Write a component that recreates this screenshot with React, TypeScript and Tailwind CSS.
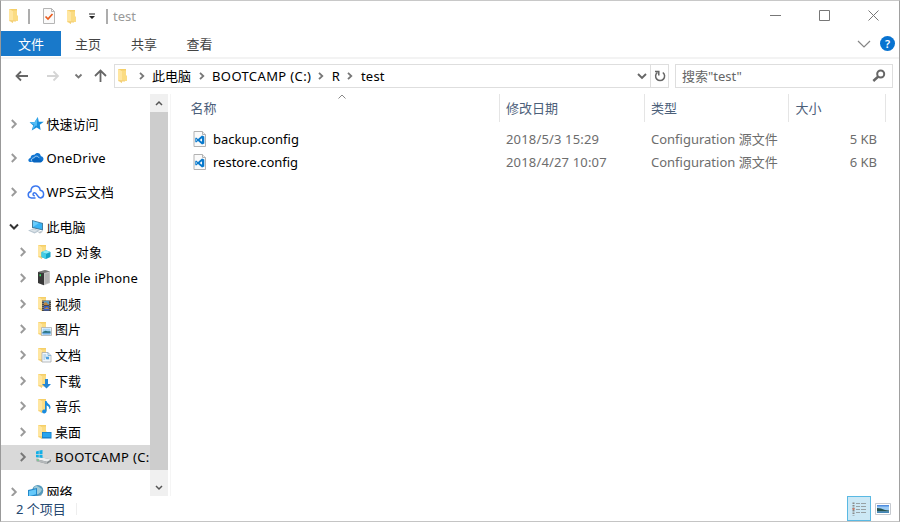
import React from 'react';

type IconProps = { className?: string };

function Folder({ children }: { children?: React.ReactNode }) {
  return (
    <svg width="18" height="18" viewBox="0 0 18 18" className="shrink-0">
      <path d="M3 2h8v11l-8 1z" fill="#f5cf68" />
      <path d="M3 2l4 2v12l-4-2z" fill="#ffe6a0" />
      <path d="M7 3.500h4v4.500l1 1v5H7z" fill="#fbdc83" />
      <path d="M3 13l4 3v-1.500h3v-1z" fill="#f3cf77" />
      {children}
    </svg>
  );
}

function Chevron({ dark, className = '' }: IconProps & { dark?: boolean }) {
  return (
    <svg width="8" height="10" viewBox="0 0 8 10" className={'shrink-0 ' + className} fill="none">
      <path d="M1.800 1L5.800 5L1.800 9" stroke={dark ? '#777777' : '#9a9a9a'} strokeWidth="1.900" />
    </svg>
  );
}

function Crumb() {
  return (
    <svg width="6" height="8" viewBox="0 0 6 8" fill="none">
      <path d="M1 .8L4.300 4L1 7.200" stroke="#777777" strokeWidth="1.800" />
    </svg>
  );
}

const icons = {
  star: (
    <svg width="18" height="18" viewBox="0 0 18 18">
      <path d="M10.800 2l1 4.700 5 .1-4 3 .8 5.200-3.900-2.600-5 3.100 1.500-4.900L2.600 7.300l5-.4z" fill="#168fdc" />
      <path d="M10.500 2.500l-.7 8.500-7-3.500 5-.4zM9.800 9l-4.500 6 1.200-4.600z" fill="#54bdf5" />
    </svg>
  ),
  cloud: (
    <svg width="18" height="18" viewBox="0 0 18 18">
      <path d="M3 13C.6 12.500 1 9.200 3.500 8.900 3.500 6.500 6 5.200 7.500 5.800c2-3 6-2 6.400 1.500 3.500.4 3.400 5.200.1 5.700H6z" fill="#1176d3" />
      <path d="M5.500 13C3.300 11.500 4.600 9 6.700 9c1.300-2.400 4.200-2.300 5.300-.3" fill="none" stroke="#fff" strokeWidth=".6" />
      <path d="M7 13.500c-2-.5-2-3.500.4-3.700 1.100-2 4.600-1.700 5 .9 2.900-.3 3.400 2.500 1.200 2.800z" fill="#0865bf" />
    </svg>
  ),
  wps: (
    <svg width="18" height="18" viewBox="0 0 18 18" fill="none" stroke="#3b78f0" strokeWidth="1.500" strokeLinecap="round">
      <path d="M8 15H4.500C.3 14.700.1 9.500 3.900 8.500 3.900 1.800 12.700 1.200 13.200 7.200c4.600.8 4.300 7.200.4 7.800-3.400 0-3.400-5.200-6-5.200-1.900 0-2.200 2.400-.4 3" />
    </svg>
  ),
  pc: (
    <svg width="18" height="18" viewBox="0 0 18 18">
      <path d="M5 2l11 3v7.500L5 10z" fill="#477fa0" />
      <path d="M6 3.200l9 2.500v5.500L6 9z" fill="#38b3f5" />
      <path d="M6 3.200l6 1.700-6 4z" fill="#69cdfc" />
      <path d="M1 12.500l6-2 6 2.200-5.500 2.800z" fill="#b9c7d1" />
      <path d="M3 12.500l4-1.200 3.800 1.400L7.500 14z" fill="#dbe3e8" />
      <path d="M11 14.500l3-1.500 2 .8-3 1.600z" fill="#b8c1c8" />
    </svg>
  ),
  three: (
    <Folder>
      <path d="M6.500 9l4.500-1.800L15.500 9v5L11 16l-4.500-2z" fill="#12a4c8" />
      <path d="M6.500 9L11 7.200 15.500 9 11 10.800z" fill="#8ce9f5" />
      <path d="M6.500 9l4.500 1.800V16l-4.500-2z" fill="#42cce5" />
    </Folder>
  ),
  phone: (
    <svg width="18" height="18" viewBox="0 0 18 18">
      <path d="M3 3l7-2 5 1.500V14l-6 2.300L3 14z" fill="#c4c4c4" />
      <path d="M3 3l7-2 5 1.500L9 4z" fill="#777" />
      <path d="M3 3l6 1v12.300L3 14z" fill="#383838" />
      <path d="M10 5l4-1v9.500L10 15z" fill="#b4b4b4" />
      <path d="M4.500 5.300h1.500v2H4.500z" fill="#39df61" />
    </svg>
  ),
  video: (
    <Folder>
      <path d="M7 5.500h9v10.500H7z" fill="#4b4944" />
      <path d="M9 6h5v4H9z" fill="#579ec9" />
      <path d="M9 11h5v4.500H9z" fill="#3b62c4" />
      <path d="M9 8l2-1 3 3H9zM9 14l3-2 2 2z" fill="#bd8543" />
      <path d="M8 6v10M15.200 6v10" stroke="#d2d1ca" strokeWidth=".8" strokeDasharray="1 1" />
    </Folder>
  ),
  picture: (
    <Folder>
      <path d="M6.500 7.500h10v8h-10z" fill="#fff" stroke="#a9adb0" strokeWidth=".8" />
      <path d="M7.500 8.500h8v6h-8z" fill="#a4d5f8" />
      <path d="M7.500 12l3-1.300 2 .5h3v2h-8z" fill="#28717d" />
      <path d="M7.500 12.800h8v1.700h-8z" fill="#6aaae0" />
    </Folder>
  ),
  doc: (
    <Folder>
      <path d="M7 6.500h6l3 3V16H7z" fill="#f3f8fc" stroke="#a6aaad" strokeWidth=".8" />
      <path d="M8.300 9h3m-3 2h6m-6 2h2m1 0h3M13 6.500v3h3" fill="none" stroke="#7cb2da" strokeWidth=".9" />
      <path d="M11 11h3v2h-3z" fill="#4ba0df" />
    </Folder>
  ),
  download: (
    <Folder><path d="M10 7h3v5h3l-4.500 4.500L7 12h3z" fill="#2285d4" /></Folder>
  ),
  music: (
    <Folder>
      <path d="M10 4h1.600c.3 3 4.400 3 3.900 7.200l-1.200 1c.2-2.400-1-2.900-2.700-3.700V14c0 3.300-5 2.900-4.500.4.300-1.500 1.600-2 2.900-1.700z" fill="#198bde" />
    </Folder>
  ),
  desktop: (
    <Folder><path d="M7 9h9.500v6.500H7z" fill="#177dc6" /><path d="M7.700 9.700h8v4.500h-8z" fill="#27a4ed" /></Folder>
  ),
  drive: (
    <svg width="18" height="18" viewBox="0 0 18 18">
      <path d="M1 11l5-1.800L16 11.500v2L12 16 1 13z" fill="#858b8e" />
      <path d="M1 11l5-1.800L16 11.500 12 13.700z" fill="#eceeef" />
      <path d="M1 11l11 2.700V16L1 13z" fill="#b4b8ba" />
      <path d="M1 3.500l2.800-.7v3.400H1zM4.400 2.600L7.500 2v4.200H4.400zM1 6.900h2.800v2.600L1 9.200zM4.400 6.900h3.100V10l-3.100-.4z" fill="#12afe7" />
      <path d="M2 12h2" stroke="#51d475" />
    </svg>
  ),
  network: (
    <svg width="18" height="18" viewBox="0 0 18 18">
      <circle cx="10.800" cy="7.500" r="5.500" fill="#5599bc" />
      <path d="M7 4c4-3 5 1 8 2-1 4-4 6-7 5z" fill="#9fcbd9" />
      <path d="M1 7l9-2v7.500l-9 2z" fill="#2388c9" />
      <path d="M2 8l7-1.700v5L2 13.200z" fill="#66c9fa" />
      <path d="M8 14l5-2 2 1-5 2.500z" fill="#9badb8" />
    </svg>
  ),
};

function TreeRow({ icon, label, child, open, selected, gap, labelClass = '' }: {
  icon: keyof typeof icons; label: string; child?: boolean; open?: boolean; selected?: boolean; gap?: boolean; labelClass?: string;
}) {
  return (
    <div className={'flex h-[25.650px] w-[149px] shrink-0 items-center overflow-hidden whitespace-nowrap ' + (child ? 'pl-[18px] ' : 'pl-[9px] ') + (selected ? 'bg-[#d9d9d9] ' : '') + (gap ? 'mb-[8.650px]' : '')}>
      {open ? (
        <svg width="10" height="8" viewBox="0 0 10 8" className="-ml-px shrink-0" fill="none"><path d="M1 1.500L5 5.500L9 1.500" stroke="#333" strokeWidth="2" /></svg>
      ) : <Chevron dark={selected} className="mr-px" />}
      <span className={'flex h-[18px] w-[18px] shrink-0 ' + (child ? 'ml-[7px]' : 'ml-[8px]')}>{icons[icon]}</span>
      <span className={(child ? 'ml-[2px] ' : 'ml-[1.500px] ') + labelClass}>{label}</span>
    </div>
  );
}

function FileIcon() {
  return (
    <svg width="14" height="18" viewBox="0 0 14 18" className="shrink-0">
      <path d="M1 1.500h8.500l3 3V16.500H1z" fill="#fafafa" stroke="#b2b2b2" />
      <path d="M9.500 1.500v3h3" fill="#eee" stroke="#b2b2b2" />
      <path d="M9 5.500l2.300 1v7L9 14.500l-4-3.600-1.900 1.600-.8-.5v-4l.8-.5L5 9.100z" fill="#0879cc" />
      <path d="M9 8.300v3.400L6.600 10zM3.200 9v2l1-1z" fill="#fafafa" />
    </svg>
  );
}

function FileRow({ name, date, size }: { name: string; date: string; size: string }) {
  return (
    <div className="flex h-[22.500px] items-center">
      <FileIcon />
      <span className="ml-[6px] w-[293px] text-black">{name}</span>
      <span className="w-[145px] tracking-[.16px]">{date}</span>
      <span className="w-[146px]">Configuration 源文件</span>
      <span className="w-20 text-right">{size}</span>
    </div>
  );
}

export default function App() {
  return (
    <div className="flex h-[522px] w-[900px] flex-col overflow-hidden border border-t-[#c8c8c8] border-r-[#a0a0a0] border-b-[#c4c4c4] border-l-[#999999] bg-white font-['Noto_Sans','Noto_Sans_CJK_SC',sans-serif] text-[13px] leading-[20px] text-black">
      <header className="flex h-[30px] shrink-0 items-center">
        <div className="ml-[5px] flex items-center"><Folder /></div>
        <div className="ml-[4px] h-[15px] w-[1.500px] bg-[#adadad]" />
        <svg width="14" height="18" viewBox="0 0 14 18" className="ml-[12.500px]">
          <path d="M1.500 1.500h8l3 3V16.500h-11z" fill="#fafafa" stroke="#b5b5b5" /><path d="M9.500 1.500v3h3" fill="none" stroke="#b5b5b5" />
          <path d="M3.500 9.500l2.500 2.500 4.500-5" fill="none" stroke="#e95b1d" strokeWidth="1.700" />
        </svg>
        <div className="mt-[2px] ml-[7.500px]"><Folder /></div>
        <svg width="8" height="7" viewBox="0 0 8 7" className="mt-px ml-[6.500px]"><path d="M1 .5h6v1H1zM1 3h6L4 6z" fill="#222" /></svg>
        <div className="ml-[10px] h-[15px] w-[1.500px] bg-[#adadad]" />
        <span className="ml-[5.500px] text-[#999999]">test</span>
        <svg width="110" height="12" viewBox="0 0 110 12" fill="none" stroke="#777777" className="mr-[19px] ml-auto">
          <path d="M0 5.500h11M49.500 .5h10v10h-10zM98.500 .5l10 10M108.500 .5l-10 10" />
        </svg>
      </header>
      <nav className="flex h-[25px] shrink-0 items-center text-[#444444]">
        <div className="flex h-full w-[60px] items-center justify-center bg-[#1979ca] text-white">文件</div>
        <span className="ml-[14px]">主页</span><span className="ml-[30px]">共享</span><span className="ml-[29.500px]">查看</span>
        <svg width="14" height="8" viewBox="0 0 14 8" className="mr-[9px] ml-auto" fill="none"><path d="M1 1l6 6 6-6" stroke="#858585" strokeWidth="1.200" /></svg>
        <span className="mr-[4px] flex h-[15px] w-[15px] items-center justify-center rounded-full bg-[#0873d0] text-[11px] font-semibold text-white">?</span>
      </nav>
      <div className="mt-px h-[2px] shrink-0 bg-[#f3f3f3]" />
      <div className="mt-[5px] flex h-[24px] shrink-0 items-center">
        <svg width="94" height="16" viewBox="0 0 94 16" fill="none" className="ml-[14px] shrink-0" strokeWidth="1.800">
          <path d="M6 3.500L1.500 8 6 12.500M2 8h11" stroke="#666" />
          <path d="M38.500 3.500L43 8l-4.500 4.500M32 8h10.500" stroke="#d5d5d5" />
          <path d="M60.500 6.500l3 3 3-3" stroke="#777" />
          <path d="M80 8l5.500-5.500L91 8M85.500 3.500V14" stroke="#666" />
        </svg>
        <div className="ml-[5px] flex h-[24px] w-[555px] shrink-0 items-center border border-[#dedede]">
          <Folder /><span className="ml-[6px]"><Crumb /></span>
          <span className="ml-[7px]">此电脑</span><span className="ml-[8px]"><Crumb /></span>
          <span className="ml-[7px] tracking-[.38px]">BOOTCAMP (C:)</span><span className="ml-[6.500px]"><Crumb /></span>
          <span className="ml-[8px]">R</span><span className="ml-[7px]"><Crumb /></span><span className="ml-[8px] tracking-[.2px]">test</span>
          <svg width="10" height="7" viewBox="0 0 10 7" fill="none" className="mr-[3px] ml-auto"><path d="M1 1l4 4 4-4" stroke="#666" strokeWidth="1.900" /></svg>
          <div className="flex h-full w-[18px] items-center justify-center border-l border-[#dedede]">
            <svg width="12" height="14" viewBox="0 0 12 14" fill="none" stroke="#666" strokeWidth="1.500"><path d="M8.800 3.500a4.500 4.500 0 1 1-5.400 0M1 2.500h3.800v4" /></svg>
          </div>
        </div>
        <div className="ml-[6px] flex h-[24px] w-[218px] shrink-0 items-center justify-between border border-[#dedede] pr-[6px] pl-[6px] text-[#666666]">
          <span>搜索"test"</span>
          <svg width="14" height="14" viewBox="0 0 14 14" fill="none" stroke="#666"><circle cx="8.700" cy="5" r="3.500" strokeWidth="2" /><path d="M6.300 7.500L1.300 12" strokeWidth="2.400" /></svg>
        </div>
      </div>
      <div className="flex h-[408px] shrink-0 pt-[6px]">
        <aside className="flex h-[402px] w-[149px] shrink-0 flex-col overflow-hidden pt-[17px]">
          <TreeRow icon="star" label="快速访问" gap />
          <TreeRow icon="cloud" label="OneDrive" labelClass="tracking-[.2px]" gap />
          <TreeRow icon="wps" label="WPS云文档" labelClass="tracking-[.25px]" gap />
          <TreeRow icon="pc" label="此电脑" open />
          <TreeRow icon="three" label="3D 对象" labelClass="tracking-[.15px]" child />
          <TreeRow icon="phone" label="Apple iPhone" labelClass="tracking-[.18px]" child />
          <TreeRow icon="video" label="视频" child />
          <TreeRow icon="picture" label="图片" child />
          <TreeRow icon="doc" label="文档" child />
          <TreeRow icon="download" label="下载" child />
          <TreeRow icon="music" label="音乐" child />
          <TreeRow icon="desktop" label="桌面" child />
          <TreeRow icon="drive" label="BOOTCAMP (C:" labelClass="tracking-[.35px]" child selected gap />
          <TreeRow icon="network" label="网络" />
        </aside>
        <div className="flex w-[18px] shrink-0 flex-col items-center justify-between bg-[#cdcdcd]">
          <div className="flex h-[18px] w-full items-center justify-center bg-[#f0f0f0]"><svg width="8" height="6" viewBox="0 0 8 6" fill="none"><path d="M1 5l3-3 3 3" stroke="#555" strokeWidth="1.500" /></svg></div>
          <div className="flex h-[26px] w-full items-center justify-center bg-[#f0f0f0] pt-[18px]"><svg width="8" height="6" viewBox="0 0 8 6" fill="none" className="mb-[8px]"><path d="M1 1l3 3 3-3" stroke="#555" strokeWidth="1.500" /></svg></div>
        </div>
        <main className="ml-[2px] w-[728px] border-l border-[#f5f5f5] text-[#6d6d6d]">
          <div className="flex h-[28px] text-[#4c607a]">
            <div className="flex w-[329px] items-center border-r border-[#e5e5e5] pl-[19.500px]">
              <span className="w-[147px]">名称</span>
              <svg width="8" height="5" viewBox="0 0 8 5" fill="none" className="mb-[24px]"><path d="M.5 4.500L4 1l3.500 3.500" stroke="#888" /></svg>
            </div>
            <div className="flex w-[145px] items-center border-r border-[#e5e5e5] pl-[6px]">修改日期</div>
            <div className="flex w-[144px] items-center border-r border-[#e5e5e5] pl-[6px]">类型</div>
            <div className="flex w-[97px] items-center border-r border-[#e5e5e5] pl-[6.500px]">大小</div>
          </div>
          <div className="pt-[6px] pl-[22px]">
            <FileRow name="backup.config" date="2018/5/3 15:29" size="5 KB" />
            <FileRow name="restore.config" date="2018/4/27 10:07" size="6 KB" />
          </div>
        </main>
      </div>
      <footer className="flex h-[25px] shrink-0 items-center text-[#24476f]">
        <span className="ml-[15px] w-[60px]">2 个项目</span><div className="h-[12px] w-px bg-[#eeeeee]" />
        <div className="mr-[8px] ml-auto flex items-center">
          <div className="flex h-[25px] w-[24px] items-center justify-center border border-[#5ab9e3] bg-[#cce8f5]">
            <svg width="16" height="16" viewBox="0 0 16 16" fill="none"><path d="M2.500 1.500v13" stroke="#888" strokeWidth="2" strokeDasharray="1.500 1" /><path d="M2.500 7v2" stroke="#c87867" strokeWidth="2" /><path d="M5 2.500h4m1 0h5M5 5.500h4m1 0h5M5 8.500h4m1 0h5M5 11.500h4m1 0h5" stroke="#97a1a5" /></svg>
          </div>
          <svg width="16" height="12" viewBox="0 0 16 12" className="ml-[4px]"><path d="M.5.500h15v11H.5z" fill="#fff" stroke="#c5c9cf" /><path d="M2 2h12v8H2z" fill="#9bcbf5" /><path d="M2 5l4 .5 4 1.500 4 .5v1H2z" fill="#26524c" /><path d="M2 8.500h12V10H2z" fill="#4387b8" /><path d="M2 2h12v1.500H2z" fill="#508ddf" /></svg>
        </div>
      </footer>
    </div>
  );
}
